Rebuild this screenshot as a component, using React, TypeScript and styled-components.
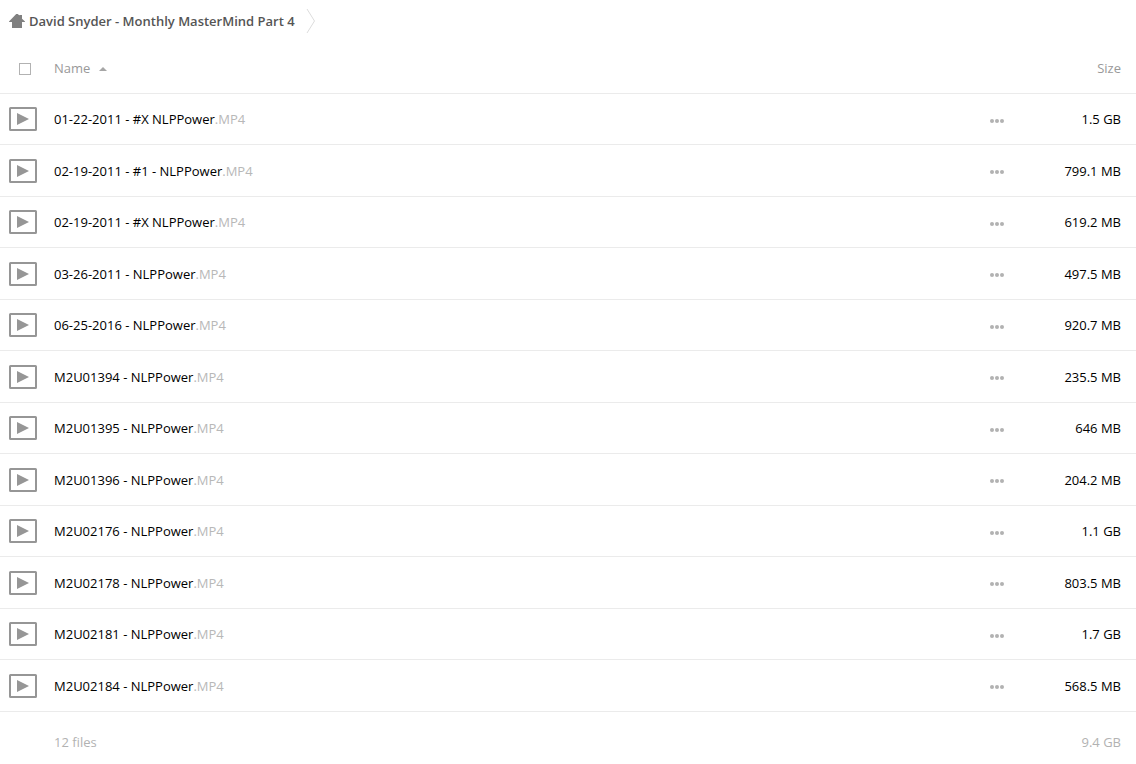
import React, { useState } from "react";
import styled, { createGlobalStyle } from "styled-components";

const GlobalStyle = createGlobalStyle`
  *, *::before, *::after { box-sizing: border-box; }
  body {
    margin: 0;
    background: #fff;
    color: #000;
    font: 13px/20px "Open Sans", sans-serif;
  }
`;

const Header = styled.nav`
  display: flex;
  align-items: center;
  height: 43px;
  padding: 0 0 1px 9px;
`;

const Crumb = styled.a`
  display: flex;
  align-items: center;
  gap: 4px;
  color: #555;
  font-weight: 600;
  text-decoration: none;
`;

const Separator = styled.svg`
  margin-left: 11px;
`;

const FileTable = styled.table`
  width: 100%;
  border-collapse: separate;
  border-spacing: 0;
  table-layout: fixed;
`;

const HeadCell = styled.th<{ $width?: number; $align?: string }>`
  width: ${(p) => (p.$width ? `${p.$width}px` : "auto")};
  height: 51px;
  padding: ${(p) => (p.$align === "right" ? "0 15px 0 0" : "0")};
  border-bottom: 1px solid #ebebeb;
  color: #999;
  font-weight: 400;
  text-align: ${(p) => p.$align ?? "left"};
`;

const CheckBox = styled.input`
  appearance: none;
  display: block;
  width: 12px;
  height: 12px;
  margin: 1px 0 0 19px;
  border: 1px solid #b2b2b2;
  background: #fff;
  &:checked { background: #999; }
`;

const SortButton = styled.button`
  display: flex;
  align-items: center;
  gap: 9px;
  padding: 0;
  border: 0;
  background: none;
  color: inherit;
  font: inherit;
  cursor: pointer;
  svg { margin-top: 2px; }
`;

const Row = styled.tr`
  height: 51px;
  &:nth-child(even) { height: 52px; }
`;

const Cell = styled.td`
  padding: 0 0 15px;
  border-bottom: 1px solid #ebebeb;
  vertical-align: bottom;
`;

const IconCell = styled(Cell)`
  padding: 0 0 13px 9px;
  svg { display: block; }
`;

const ActionCell = styled(Cell)`
  padding: 20px 0 0;
  vertical-align: top;
`;

const SizeCell = styled(Cell)`
  padding-right: 15px;
  text-align: right;
`;

const FileLink = styled.a`
  color: #000;
  text-decoration: none;
`;

const Extension = styled.span`
  color: #b8b8b8;
`;

const MoreButton = styled.button`
  display: block;
  padding: 5px 0;
  border: 0;
  background: none;
  cursor: pointer;
  svg { display: block; }
`;

const TotalCell = styled.td`
  padding: 20px 0 8px;
  color: #b2b2b2;
`;

const TotalSize = styled(TotalCell)`
  padding-right: 15px;
  text-align: right;
`;

const HomeIcon = () => (
  <svg width="16" height="14" viewBox="0 0 16 14" fill="#808080" aria-hidden="true">
    <path d="M7.2 0H8.8L10.4 1.6V1H13V4.8L16 7.6V8H13V14H3V8H0V7.4Z" />
  </svg>
);

const VideoIcon = () => (
  <svg width="28" height="24" viewBox="0 0 28 24" aria-hidden="true">
    <rect x="1" y="1" width="26" height="22" rx="0.5" fill="none" stroke="#969696" strokeWidth="2" />
    <path d="M8 6 20 12 8 18Z" fill="#969696" />
  </svg>
);

const DotsIcon = () => (
  <svg width="14" height="4" viewBox="0 0 14 4" fill="#b2b2b2" aria-hidden="true">
    <circle cx="2" cy="2" r="2" />
    <circle cx="7" cy="2" r="2" />
    <circle cx="12" cy="2" r="2" />
  </svg>
);

const files = [
  ["01-22-2011 - #X NLPPower", "1.5 GB"],
  ["02-19-2011 - #1 - NLPPower", "799.1 MB"],
  ["02-19-2011 - #X NLPPower", "619.2 MB"],
  ["03-26-2011 - NLPPower", "497.5 MB"],
  ["06-25-2016 - NLPPower", "920.7 MB"],
  ["M2U01394 - NLPPower", "235.5 MB"],
  ["M2U01395 - NLPPower", "646 MB"],
  ["M2U01396 - NLPPower", "204.2 MB"],
  ["M2U02176 - NLPPower", "1.1 GB"],
  ["M2U02178 - NLPPower", "803.5 MB"],
  ["M2U02181 - NLPPower", "1.7 GB"],
  ["M2U02184 - NLPPower", "568.5 MB"],
];

export default function App() {
  const [descending, setDescending] = useState(false);
  const rows = descending ? [...files].reverse() : files;

  return (
    <>
      <GlobalStyle />
      <Header aria-label="Breadcrumb">
        <Crumb href="#">
          <HomeIcon />
          David Snyder - Monthly MasterMind Part 4
        </Crumb>
        <Separator width="10" height="24" viewBox="0 0 10 24" fill="none" stroke="#dcdcdc" aria-hidden="true">
          <path d="M1 0 8.5 12 1 24" />
        </Separator>
      </Header>
      <main>
        <FileTable>
          <thead>
            <tr>
              <HeadCell $width={54}>
                <CheckBox type="checkbox" aria-label="Select all files" />
              </HeadCell>
              <HeadCell>
                <SortButton type="button" onClick={() => setDescending(!descending)}>
                  Name
                  <svg width="8" height="4" viewBox="0 0 8 4" fill="#a6a6a6" aria-hidden="true">
                    <path d={descending ? "M0 0H8L4 4Z" : "M4 0 8 4H0Z"} />
                  </svg>
                </SortButton>
              </HeadCell>
              <HeadCell $width={46} />
              <HeadCell $width={100} $align="right">Size</HeadCell>
            </tr>
          </thead>
          <tbody>
            {rows.map(([name, size]) => (
              <Row key={name}>
                <IconCell><VideoIcon /></IconCell>
                <Cell>
                  <FileLink href="#">{name}<Extension>.MP4</Extension></FileLink>
                </Cell>
                <ActionCell>
                  <MoreButton type="button" aria-label={`More actions for ${name}`}>
                    <DotsIcon />
                  </MoreButton>
                </ActionCell>
                <SizeCell>{size}</SizeCell>
              </Row>
            ))}
          </tbody>
          <tfoot>
            <tr>
              <TotalCell />
              <TotalCell colSpan={2}>12 files</TotalCell>
              <TotalSize>9.4 GB</TotalSize>
            </tr>
          </tfoot>
        </FileTable>
      </main>
    </>
  );
}
